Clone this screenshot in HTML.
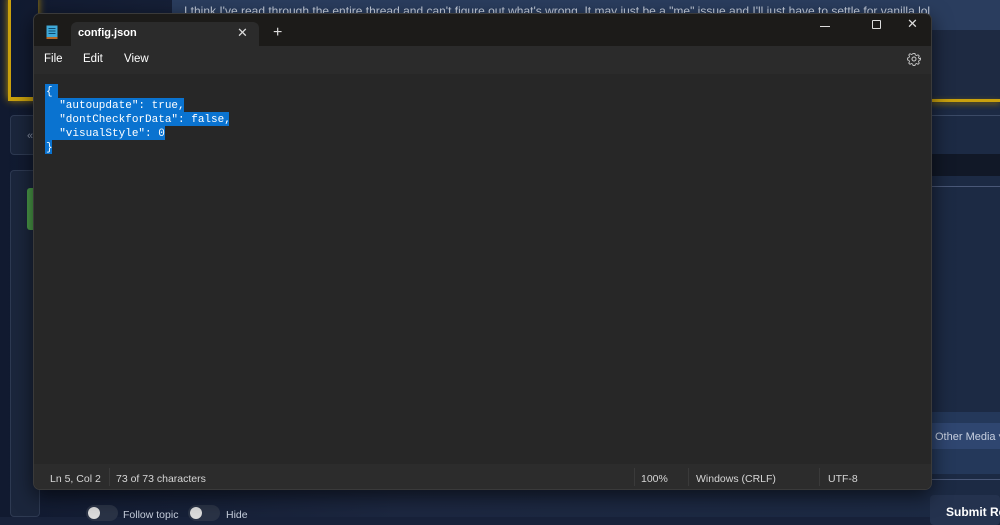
<!DOCTYPE html>
<html><head><meta charset="utf-8"><style>
*{margin:0;padding:0;box-sizing:border-box}
body{width:1000px;height:517px;overflow:hidden;background:#18223a;font-family:"Liberation Sans",sans-serif;position:relative}
.abs{position:absolute}
.mono{font-family:"Liberation Mono",monospace;font-size:11px;color:#fff;white-space:pre}
.sel{position:absolute;background:#0a73d0;height:14px}
.ln{position:absolute;left:46px;line-height:14px}
.st{position:absolute;top:473px;font-size:10.5px;color:#d6d6d6}
.sep{position:absolute;top:468px;width:1px;height:18px;background:#3a3a3a}
</style></head><body>
<div class="abs" style="left:0;top:0;width:1000px;height:517px;background:linear-gradient(90deg,#111a30 0%,#1c2740 40%,#1c2a44 100%)"></div>
<div class="abs" style="left:172px;top:0;width:828px;height:30px;background:#2a3d5e"></div>
<div class="abs" style="left:184px;top:4px;font-size:12px;color:#c8d0de;white-space:nowrap">I think I've read through the entire thread and can't figure out what's wrong. It may just be a "me" issue and I'll just have to settle for vanilla lol</div>
<div class="abs" style="left:930px;top:30px;width:70px;height:70px;background:#1e2a42"></div>
<div class="abs" style="left:8px;top:-5px;width:30px;height:105px;border:3px solid #c9a10e;border-top:none;border-right:none;box-shadow:0 0 8px #b58d0a"></div>
<div class="abs" style="left:8px;top:98px;width:30px;height:3px;background:#c9a10e"></div>
<div class="abs" style="left:930px;top:99px;width:70px;height:3px;background:#c9a10e;box-shadow:0 2px 6px #8a6d08"></div>
<div class="abs" style="left:930px;top:115px;width:70px;height:1px;background:#3b4a66"></div>
<div class="abs" style="left:930px;top:154px;width:70px;height:22px;background:#111827"></div>
<div class="abs" style="left:930px;top:186px;width:70px;height:1px;background:#4a5878"></div>
<div class="abs" style="left:10px;top:115px;width:30px;height:40px;border:1px solid #2e3a52;border-radius:4px;background:#1b263c"></div>
<div class="abs" style="left:27px;top:130px;color:#8893a8;font-size:11px">«</div>
<div class="abs" style="left:10px;top:170px;width:30px;height:347px;border:1px solid #2e3a52;border-radius:4px;background:#1b263c"></div>
<div class="abs" style="left:27px;top:188px;width:8px;height:42px;background:#4a9a48;border-radius:3px 0 0 3px"></div>
<div class="abs" style="left:930px;top:412px;width:70px;height:62px;background:#24385a"></div>
<div class="abs" style="left:930px;top:423px;width:70px;height:26px;background:#2f4670"></div>
<div class="abs" style="left:935px;top:430px;font-size:11px;color:#c8d0e0;white-space:nowrap">Other Media ▾</div>
<div class="abs" style="left:930px;top:479px;width:70px;height:1px;background:#4a5878"></div>
<div class="abs" style="left:930px;top:495px;width:70px;height:30px;background:#24324e;border-radius:4px"></div>
<div class="abs" style="left:946px;top:505px;font-size:12px;color:#fff;font-weight:bold;white-space:nowrap">Submit Reply</div>
<div class="abs" style="left:86px;top:505px;width:32px;height:16px;border-radius:8px;background:#2a3346"></div>
<div class="abs" style="left:88px;top:507px;width:12px;height:12px;border-radius:6px;background:#ddd"></div>
<div class="abs" style="left:123px;top:509px;font-size:10.5px;color:#c8d0de">Follow topic</div>
<div class="abs" style="left:188px;top:505px;width:32px;height:16px;border-radius:8px;background:#2a3346"></div>
<div class="abs" style="left:190px;top:507px;width:12px;height:12px;border-radius:6px;background:#ddd"></div>
<div class="abs" style="left:226px;top:509px;font-size:10.5px;color:#c8d0de">Hide</div>

<div class="abs" style="left:33px;top:13px;width:899px;height:477px;background:#272727;border:1px solid #3a3a3a;border-radius:7px;overflow:hidden;box-shadow:0 6px 20px rgba(0,0,0,.6)">
 <div class="abs" style="left:0;top:0;width:899px;height:32px;background:#1c1b19"></div>
 <div class="abs" style="left:37px;top:8px;width:188px;height:28px;background:#2b2b2b;border-radius:6px 6px 0 0"></div>
 <svg class="abs" style="left:12px;top:11px" width="12" height="14" viewBox="0 0 12 14"><rect x="0.5" y="0.5" width="11" height="12" fill="#3fa9d8"/><rect x="0.5" y="12" width="11" height="2" fill="#b86a2a"/><path d="M2.5 3.5h7M2.5 6h7M2.5 8.5h7" stroke="#0c4a70" stroke-width="1"/></svg>
 <div class="abs" style="left:44px;top:13px;font-size:11px;color:#fff;font-weight:bold">config.json</div>
 <div class="abs" style="left:203px;top:11px;font-size:13px;color:#ddd">✕</div>
 <div class="abs" style="left:239px;top:10px;font-size:16px;color:#ddd">+</div>
 <div class="abs" style="left:786px;top:12px;width:10px;height:1px;background:#ddd"></div>
 <div class="abs" style="left:838px;top:6px;width:9px;height:9px;border:1px solid #ddd;border-radius:1px"></div>
 <div class="abs" style="left:873px;top:2px;font-size:13px;color:#ddd">✕</div>
 <div class="abs" style="left:0;top:32px;width:899px;height:28px;background:#2b2b2b"></div>
 <div class="abs" style="left:10px;top:39px;font-size:11.5px;color:#fff">File</div>
 <div class="abs" style="left:49px;top:39px;font-size:11.5px;color:#fff">Edit</div>
 <div class="abs" style="left:90px;top:39px;font-size:11.5px;color:#fff">View</div>
 <svg class="abs" style="left:873px;top:38px" width="14" height="14" viewBox="0 0 14 14"><circle cx="7" cy="7" r="2" fill="none" stroke="#ccc"/><path d="M6 1h2l.4 1.6 1.5.7 1.4-.9 1.4 1.4-.9 1.4.7 1.5L14 6v2l-1.5.4-.7 1.5.9 1.4-1.4 1.4-1.4-.9-1.5.7L8 14H6l-.4-1.5-1.5-.7-1.4.9-1.4-1.4.9-1.4-.7-1.5L0 8V6l1.5-.4.7-1.5-.9-1.4 1.4-1.4 1.4.9 1.5-.7z" fill="none" stroke="#ccc" stroke-width="0.9" transform="translate(0.5 0.5) scale(0.93)"/></svg>
 <div class="abs" style="left:0;top:450px;width:899px;height:27px;background:#2c2c2c"></div>
</div>
<div class="sel" style="left:45px;top:84px;width:13px"></div>
<div class="sel" style="left:45px;top:98px;width:139px"></div>
<div class="sel" style="left:45px;top:112px;width:184px"></div>
<div class="sel" style="left:45px;top:126px;width:120px"></div>
<div class="sel" style="left:45px;top:140px;width:7px"></div>
<div class="mono ln" style="top:85px">{</div>
<div class="mono ln" style="top:99px">  "autoupdate": true,</div>
<div class="mono ln" style="top:113px">  "dontCheckforData": false,</div>
<div class="mono ln" style="top:127px">  "visualStyle": 0</div>
<div class="mono ln" style="top:141px">}</div>
<div class="st" style="left:50px">Ln 5, Col 2</div>
<div class="sep" style="left:109px"></div>
<div class="st" style="left:116px">73 of 73 characters</div>
<div class="sep" style="left:634px"></div>
<div class="st" style="left:641px">100%</div>
<div class="sep" style="left:688px"></div>
<div class="st" style="left:696px">Windows (CRLF)</div>
<div class="sep" style="left:819px"></div>
<div class="st" style="left:828px">UTF-8</div>
</body></html>
